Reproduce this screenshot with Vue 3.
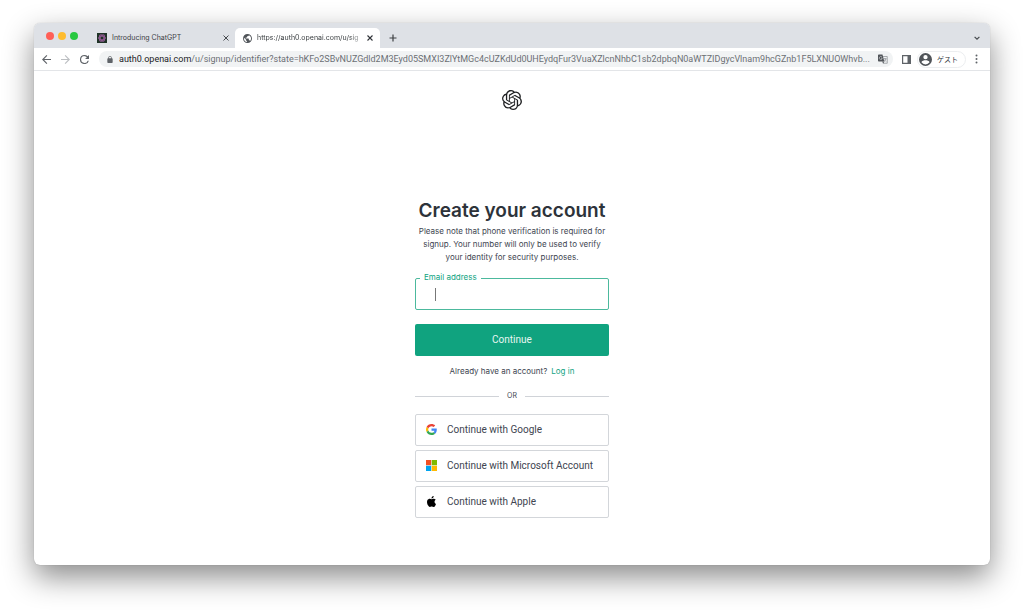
<script setup>
import { ref } from 'vue'

const email = ref('')
const host = 'auth0.openai.com'
const path =
  '/u/signup/identifier?state=hKFo2SBvNUZGdld2M3Eyd05SMXI3ZlYtMGc4cUZKdUd0UHEydqFur3VuaXZlcnNhbC1sb2dpbqN0aWTZIDgycVlnam9hcGZnb1F5LXNUOWhvb...'
</script>

<template>
  <div class="desktop">
    <div class="window">
      <header class="tabs">
        <div class="lights">
          <button class="light red" type="button" aria-label="Close window"></button>
          <button class="light yellow" type="button" aria-label="Minimize window"></button>
          <button class="light green" type="button" aria-label="Zoom window"></button>
        </div>
        <div class="tab">
          <svg class="favicon" viewBox="0 0 20 20" aria-hidden="true">
            <rect width="20" height="20" fill="#1f3327" />
            <g fill="none" stroke="#8f5a90" stroke-width="2">
              <ellipse cx="10" cy="10" rx="7" ry="3.800" />
              <ellipse cx="10" cy="10" rx="7" ry="3.800" transform="rotate(60 10 10)" />
              <ellipse cx="10" cy="10" rx="7" ry="3.800" transform="rotate(120 10 10)" />
            </g>
          </svg>
          <span class="tab-title">Introducing ChatGPT</span>
          <button class="icon-btn" type="button" aria-label="Close tab">
            <svg class="cross" viewBox="0 0 8 8"><path d="M1.500 1.500l5 5M6.500 1.500l-5 5" fill="none" stroke="#45494d" stroke-width="1" /></svg>
          </button>
        </div>
        <div class="tab active">
          <svg class="favicon" viewBox="2 2 20 20" aria-hidden="true">
            <path fill="#505459" d="M12 2C6.480 2 2 6.480 2 12s4.480 10 10 10 10-4.480 10-10S17.520 2 12 2zM11 19.930c-3.950-.49-7-3.850-7-7.930 0-.62.08-1.210.21-1.790L9 15v1c0 1.100.9 2 2 2v1.930zM17.900 17.390c-.26-.81-1-1.390-1.900-1.390h-1v-3c0-.55-.45-1-1-1H8v-2h2c.55 0 1-.45 1-1V7h2c1.100 0 2-.9 2-2v-.41c2.930 1.190 5 4.060 5 7.410 0 2.080-.8 3.970-2.100 5.390z" />
          </svg>
          <span class="tab-title fade">https://auth0.openai.com/u/sig</span>
          <button class="icon-btn" type="button" aria-label="Close tab">
            <svg class="cross" viewBox="0 0 8 8"><path d="M1.500 1.500l5 5M6.500 1.500l-5 5" fill="none" stroke="#303338" stroke-width="1.100" /></svg>
          </button>
        </div>
        <button class="icon-btn add" type="button" aria-label="New tab">
          <svg class="plus" viewBox="0 0 8 8"><path d="M4 .5v7M.5 4h7" fill="none" stroke="#3c4043" stroke-width="1.200" /></svg>
        </button>
        <button class="icon-btn search" type="button" aria-label="Search tabs">
          <svg class="cross" viewBox="0 0 8 8"><path d="M1.600 2.800L4 5.200l2.400-2.400" fill="none" stroke="#45494d" stroke-width="1.200" /></svg>
        </button>
      </header>

      <div class="toolbar">
        <button class="icon-btn" type="button" aria-label="Back">
          <svg class="nav" viewBox="4 4 16 16"><path fill="#5f6368" d="M20 11H7.830l5.590-5.590L12 4l-8 8 8 8 1.410-1.410L7.830 13H20v-2z" /></svg>
        </button>
        <button class="icon-btn" type="button" aria-label="Forward">
          <svg class="nav" viewBox="4 4 16 16"><path fill="#bcbfc2" d="M12 4l-1.410 1.410L16.170 11H4v2h12.170l-5.580 5.590L12 20l8-8z" /></svg>
        </button>
        <button class="icon-btn" type="button" aria-label="Reload">
          <svg class="nav" viewBox="4 4 16 16"><path fill="#5f6368" d="M17.650 6.350A7.958 7.958 0 0 0 12 4a8 8 0 1 0 7.730 10h-2.080A6 6 0 1 1 12 6c1.660 0 3.140.69 4.220 1.780L13 11h7V4l-2.350 2.350z" /></svg>
        </button>
        <div class="omnibox">
          <svg class="lock" viewBox="4 1 16 21" aria-hidden="true"><path fill="#5f6368" d="M18 8h-1V6c0-2.760-2.240-5-5-5S7 3.240 7 6v2H6c-1.100 0-2 .9-2 2v10c0 1.100.9 2 2 2h12c1.100 0 2-.9 2-2V10c0-1.100-.9-2-2-2zM9 6c0-1.660 1.340-3 3-3s3 1.340 3 3v2H9V6z" /></svg>
          <div class="url"><span class="host">{{ host }}</span>{{ path }}</div>
          <button class="icon-btn" type="button" aria-label="Translate this page">
            <svg class="translate" viewBox="0 0 20 20">
              <path d="M9 5h9.500v13.500H10z" fill="#f1f3f4" stroke="#777b80" stroke-width="1.200" />
              <path d="M11 9.500h6M14 8v1.500M16 9.500c-.5 2.500-2 4-4 5.500M12.500 11.500l3.500 3.500" fill="none" stroke="#777b80" stroke-width="1.200" />
              <path d="M1.500 1H9l3.500 14h-11A1.500 1.500 0 0 1 0 13.500v-11A1.500 1.500 0 0 1 1.500 1z" fill="#505459" />
              <path d="M8 6.300A3 3 0 1 0 8.500 8.500H6" fill="none" stroke="#d8dadc" stroke-width="1.200" />
              <path d="M9 15.500h3.500l-2 3z" fill="#505459" />
            </svg>
          </button>
        </div>
        <button class="icon-btn panel-btn" type="button" aria-label="Side panel">
          <svg class="panel" viewBox="0 0 9 9"><path d="M.6.6h7.800v7.800H.6z" fill="none" stroke="#5f6368" stroke-width="1.200" /><path d="M5.500 0H9v9H5.500z" fill="#5f6368" /></svg>
        </button>
        <button class="profile" type="button">
          <svg class="avatar" viewBox="2 2 20 20" aria-hidden="true"><path fill="#505459" fill-rule="evenodd" d="M12 2a10 10 0 1 0 0 20 10 10 0 0 0 0-20zm0 3.200a3.300 3.300 0 1 1 0 6.600 3.300 3.300 0 0 1 0-6.600zM5.800 16.200c.3-2.100 4-3.100 6.200-3.100s5.900 1 6.200 3.100A7.500 7.500 0 0 1 12 19.500a7.500 7.500 0 0 1-6.200-3.300z" /></svg>
          <span>ゲスト</span>
        </button>
        <button class="icon-btn menu" type="button" aria-label="Menu">
          <svg class="dots" viewBox="0 0 3 10"><circle cx="1.500" cy="1.500" r="1" /><circle cx="1.500" cy="5" r="1" /><circle cx="1.500" cy="8.500" r="1" /></svg>
        </button>
      </div>

      <main class="page">
        <svg class="logo" viewBox="0 0 24 24" role="img" aria-label="OpenAI">
          <path fill="#202123" d="M22.2819 9.8211a5.9847 5.9847 0 0 0-.5157-4.9108 6.0462 6.0462 0 0 0-6.5098-2.9A6.0651 6.0651 0 0 0 4.9807 4.1818a5.9847 5.9847 0 0 0-3.9977 2.9 6.0462 6.0462 0 0 0 .7427 7.0966 5.98 5.98 0 0 0 .511 4.9107 6.051 6.051 0 0 0 6.5146 2.9001A5.9847 5.9847 0 0 0 13.2599 24a6.0557 6.0557 0 0 0 5.7718-4.2058 5.9894 5.9894 0 0 0 3.9977-2.9001 6.0557 6.0557 0 0 0-.7475-7.0729zm-9.022 12.6081a4.4755 4.4755 0 0 1-2.8764-1.0408l.1419-.0804 4.7783-2.7582a.7948.7948 0 0 0 .3927-.6813v-6.7369l2.02 1.1686a.071.071 0 0 1 .038.052v5.5826a4.504 4.504 0 0 1-4.4945 4.4944zm-9.6607-4.1254a4.4708 4.4708 0 0 1-.5346-3.0137l.142.0852 4.783 2.7582a.7712.7712 0 0 0 .7806 0l5.8428-3.3685v2.3324a.0804.0804 0 0 1-.0332.0615L9.74 19.9502a4.4992 4.4992 0 0 1-6.1408-1.6464zM2.3408 7.8956a4.485 4.485 0 0 1 2.3655-1.9728V11.6a.7664.7664 0 0 0 .3879.6765l5.8144 3.3543-2.0201 1.1685a.0757.0757 0 0 1-.071 0l-4.8303-2.7865A4.504 4.504 0 0 1 2.3408 7.872zm16.5963 3.8558L13.1038 8.364 15.1192 7.2a.0757.0757 0 0 1 .071 0l4.8303 2.7913a4.4944 4.4944 0 0 1-.6765 8.1042v-5.6772a.79.79 0 0 0-.407-.667zm2.0107-3.0231l-.142-.0852-4.7735-2.7818a.7759.7759 0 0 0-.7854 0L9.409 9.2297V6.8974a.0662.0662 0 0 1 .0284-.0615l4.8303-2.7866a4.4992 4.4992 0 0 1 6.6802 4.66zM8.3065 12.863l-2.02-1.1638a.0804.0804 0 0 1-.038-.0567V6.0742a4.4992 4.4992 0 0 1 7.3757-3.4537l-.142.0805L8.704 5.459a.7948.7948 0 0 0-.3927.6813zm1.0976-2.3654l2.602-1.4998 2.6069 1.4998v2.9994l-2.5974 1.4997-2.6067-1.4997Z" />
        </svg>
        <form class="form" @submit.prevent>
          <h1>Create your account</h1>
          <p class="note">
            Please note that phone verification is required for<br />
            signup. Your number will only be used to verify<br />
            your identity for security purposes.
          </p>
          <div class="field">
            <label for="email">Email address</label>
            <input id="email" v-model="email" type="email" />
            <span class="caret"></span>
          </div>
          <button class="submit" type="submit">Continue</button>
          <p class="login">Already have an account?<a href="#login">Log in</a></p>
          <div class="divider"><span>OR</span></div>
          <div class="providers">
            <button class="provider" type="button">
              <svg class="brand" viewBox="0 0 48 48" aria-hidden="true">
                <path fill="#EA4335" d="M24 9.500c3.540 0 6.710 1.220 9.210 3.600l6.850-6.850C35.900 2.380 30.470 0 24 0 14.620 0 6.510 5.380 2.560 13.220l7.980 6.190C12.430 13.720 17.740 9.500 24 9.500z" />
                <path fill="#4285F4" d="M46.980 24.550c0-1.570-.15-3.090-.38-4.550H24v9.020h12.940c-.58 2.960-2.260 5.480-4.780 7.180l7.730 6c4.510-4.180 7.090-10.360 7.090-17.650z" />
                <path fill="#FBBC05" d="M10.530 28.590c-.48-1.450-.76-2.990-.76-4.590s.27-3.140.76-4.590l-7.980-6.190C.92 16.460 0 20.120 0 24c0 3.880.92 7.540 2.560 10.780l7.970-6.190z" />
                <path fill="#34A853" d="M24 48c6.480 0 11.930-2.130 15.890-5.810l-7.730-6c-2.150 1.450-4.920 2.300-8.160 2.300-6.260 0-11.570-4.220-13.470-9.910l-7.980 6.190C6.510 42.620 14.620 48 24 48z" />
              </svg>
              <span>Continue with Google</span>
            </button>
            <button class="provider" type="button">
              <svg class="brand" viewBox="0 0 21 21" aria-hidden="true">
                <path fill="#f25022" d="M0 0h10v10H0z" />
                <path fill="#7fba00" d="M11 0h10v10H11z" />
                <path fill="#00a4ef" d="M0 11h10v10H0z" />
                <path fill="#ffb900" d="M11 11h10v10H11z" />
              </svg>
              <span>Continue with Microsoft Account</span>
            </button>
            <button class="provider" type="button">
              <svg class="brand" viewBox="0 0 24 24" aria-hidden="true">
                <path d="M12.152 6.896c-.948 0-2.415-1.078-3.960-1.040-2.040.027-3.910 1.183-4.961 3.014-2.117 3.675-.546 9.103 1.519 12.090 1.013 1.454 2.208 3.090 3.792 3.039 1.520-.065 2.090-.987 3.935-.987 1.831 0 2.350.987 3.960.948 1.637-.026 2.676-1.480 3.676-2.948 1.156-1.688 1.636-3.325 1.662-3.415-.039-.013-3.182-1.221-3.220-4.857-.026-3.040 2.480-4.494 2.597-4.559-1.429-2.090-3.623-2.324-4.390-2.376-2-.156-3.675 1.090-4.610 1.090zM15.530 3.830c.843-1.012 1.400-2.427 1.245-3.830-1.207.052-2.662.805-3.532 1.818-.78.896-1.454 2.338-1.273 3.714 1.338.104 2.715-.688 3.559-1.701" />
              </svg>
              <span>Continue with Apple</span>
            </button>
          </div>
        </form>
      </main>
    </div>
  </div>
</template>

<style>
body {
  margin: 0;
  background: #fff;
}
</style>

<style scoped>
* {
  box-sizing: border-box;
}
.desktop {
  min-height: 100vh;
  display: flex;
  padding: 23px 34px 45px;
  overflow: hidden;
  font-family: Inter, "Liberation Sans", "Noto Sans CJK JP", sans-serif;
  color: #404550;
}
button {
  font: inherit;
  color: inherit;
  border: 0;
  padding: 0;
  background: none;
}
svg {
  display: block;
  flex: none;
}
.window {
  flex: 1;
  min-width: 0;
  display: flex;
  flex-direction: column;
  background: #fff;
  border-radius: 6px;
  box-shadow: 0 12px 30px rgba(0, 0, 0, 0.46), 0 0 1px rgba(0, 0, 0, 0.3);
}
.tabs {
  display: flex;
  align-items: flex-end;
  height: 25px;
  padding: 0 9px 0 12px;
  background: #dee1e6;
  border-radius: 6px 6px 0 0;
}
.lights {
  display: flex;
  align-self: center;
  gap: 4px;
  width: 46px;
}
.light {
  width: 8px;
  height: 8px;
  border-radius: 50%;
}
.red { background: #ff5f57; }
.yellow { background: #febc2e; }
.green { background: #28c840; }
.icon-btn {
  display: flex;
  align-items: center;
  justify-content: center;
}
.tab {
  display: flex;
  align-items: center;
  width: 143px;
  height: 20px;
  padding: 0 5px;
  font-size: 7px;
  line-height: 12px;
  color: #3c4043;
}
.tab.active {
  width: 145px;
  padding: 0 6px 0 8px;
  background: #fff;
  border-radius: 5px 5px 0 0;
}
.favicon {
  width: 9px;
  height: 9px;
  margin-right: 5px;
}
.tab:not(.active) .favicon {
  width: 10px;
  height: 10px;
}
.tab-title {
  flex: 1;
  min-width: 0;
  white-space: nowrap;
}
.fade {
  mask-image: linear-gradient(to right, #000 84%, transparent);
}
.cross {
  width: 8px;
  height: 8px;
}
.add {
  height: 20px;
  margin-left: 9px;
}
.plus {
  width: 8px;
  height: 8px;
}
.search {
  height: 20px;
  margin-left: auto;
}
.toolbar {
  display: flex;
  align-items: center;
  height: 23px;
  padding: 0 9px 0 8px;
  border-bottom: 1px solid #e3e5e8;
}
.nav {
  width: 9px;
  height: 9px;
  margin-right: 10px;
}
.omnibox {
  flex: 1;
  min-width: 0;
  display: flex;
  align-items: center;
  height: 16px;
  padding: 0 5px 0 8px;
  border-radius: 8px;
  background: #f1f3f4;
}
.lock {
  width: 6px;
  height: 7px;
  margin-right: 6px;
}
.url {
  flex: 1;
  min-width: 0;
  overflow: hidden;
  white-space: nowrap;
  font-family: Roboto, "Liberation Sans", sans-serif;
  font-size: 9px;
  line-height: 16px;
  color: #6c7074;
}
.host {
  color: #202124;
}
.translate {
  width: 10px;
  height: 10px;
}
.panel-btn {
  margin-left: 9px;
}
.panel {
  width: 9px;
  height: 9px;
}
.profile {
  display: flex;
  align-items: center;
  gap: 5px;
  height: 17px;
  margin-left: 6px;
  padding: 0 7px 0 1px;
  border: 1px solid #eceef0;
  border-radius: 9px;
  font-size: 7px;
  color: #303338;
}
.avatar {
  width: 13px;
  height: 13px;
}
.menu {
  width: 9px;
  margin-left: 6px;
}
.dots {
  width: 3px;
  height: 10px;
  fill: #5f6368;
}
.page {
  flex: 1;
  display: flex;
  flex-direction: column;
  align-items: center;
  padding: 19px 20px 32px;
}
.logo {
  width: 20px;
  height: 20px;
}
.form {
  width: 100%;
  max-width: 194px;
  margin-top: 88px;
}
h1 {
  margin: 0;
  font-size: 19px;
  line-height: 26px;
  font-weight: 600;
  text-align: center;
  white-space: nowrap;
  color: #2d333a;
}
.note {
  margin: 1px 0 14px;
  font-size: 8px;
  line-height: 13px;
  text-align: center;
  white-space: nowrap;
}
.field {
  position: relative;
}
.field label {
  position: absolute;
  top: -7px;
  left: 5px;
  padding: 0 4px;
  background: #fff;
  font-size: 8px;
  line-height: 12px;
  color: #10a37f;
}
.field input {
  display: block;
  width: 100%;
  height: 32px;
  padding: 0 19px;
  border: 1px solid #4cb99d;
  border-radius: 2px;
  outline: 0;
  background: #fff;
  font: inherit;
  font-size: 10px;
}
.caret {
  position: absolute;
  top: 10px;
  left: 20px;
  width: 1px;
  height: 13px;
  background: #777;
}
.submit {
  display: block;
  width: 100%;
  height: 32px;
  margin-top: 14px;
  padding-bottom: 1px;
  border-radius: 2px;
  background: #10a37f;
  color: #e8f6f2;
  font-family: Roboto, "Liberation Sans", sans-serif;
  font-size: 10px;
}
.login {
  margin: 9px 0 0;
  font-size: 8px;
  line-height: 13px;
  text-align: center;
}
.login a {
  margin-left: 4px;
  color: #10a37f;
  text-decoration: none;
}
.divider {
  display: flex;
  align-items: center;
  gap: 8px;
  margin: 12px 0;
  font-size: 7px;
  line-height: 12px;
}
.divider::before,
.divider::after {
  content: "";
  flex: 1;
  height: 1px;
  background: #d0d3d8;
}
.providers {
  display: grid;
  gap: 4px;
}
.provider {
  display: flex;
  align-items: center;
  gap: 10px;
  width: 100%;
  height: 32px;
  padding: 0 10px 1px;
  border: 1px solid #d3d6da;
  border-radius: 2px;
  font-family: Roboto, "Liberation Sans", sans-serif;
  font-size: 10px;
  white-space: nowrap;
}
.brand {
  width: 11px;
  height: 11px;
}
</style>
